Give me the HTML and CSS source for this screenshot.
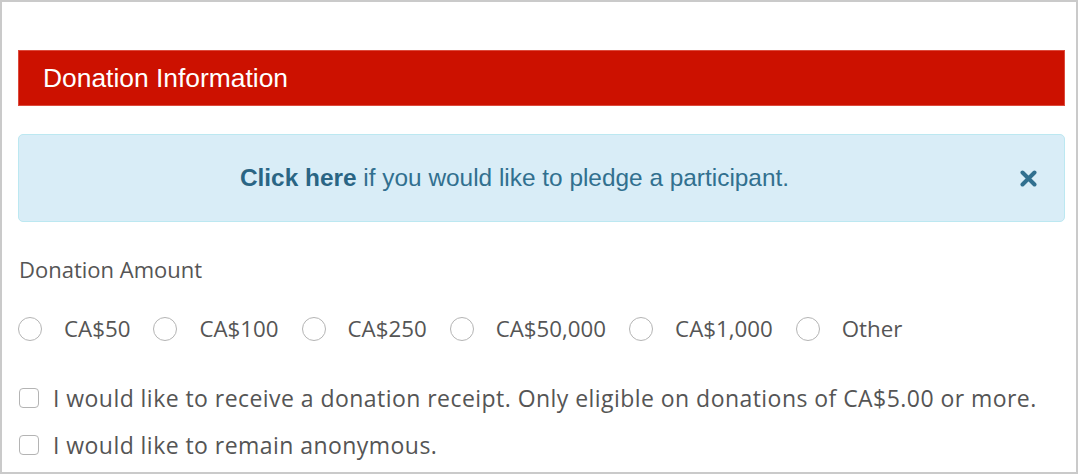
FILE: index.html
```html
<!DOCTYPE html>
<html>
<head>
    <title>Donation Information</title>
    <link rel="stylesheet" href="styles.css">
</head>
<body>
    <div class="frame">
        <div class="section-head">Donation Information</div>

        <div class="alert">
            <p class="alert-text"><a href="#" class="alert-link">Click here</a> if you would like to pledge a participant.</p>
            <button class="close" type="button" aria-label="Close">
                <svg width="17" height="17" viewBox="0 0 17 17"><path d="M2.5 2.5 L14.5 14.5 M14.5 2.5 L2.5 14.5" stroke="#31708f" stroke-width="4" stroke-linecap="round"/></svg>
            </button>
        </div>

        <div class="field-label">Donation Amount</div>
        <div class="amounts">
            <label class="amount"><input type="radio" name="amount"><span>CA$50</span></label>
            <label class="amount"><input type="radio" name="amount"><span>CA$100</span></label>
            <label class="amount"><input type="radio" name="amount"><span>CA$250</span></label>
            <label class="amount"><input type="radio" name="amount"><span>CA$50,000</span></label>
            <label class="amount"><input type="radio" name="amount"><span>CA$1,000</span></label>
            <label class="amount"><input type="radio" name="amount"><span>Other</span></label>
        </div>

        <label class="check"><input type="checkbox"><span>I would like to receive a donation receipt. Only eligible on donations of CA$5.00 or more.</span></label>
        <label class="check"><input type="checkbox"><span>I would like to remain anonymous.</span></label>
    </div>
</body>
</html>
```

FILE: styles.css
```css
html, body { margin: 0; padding: 0; background: #fff; }
.frame { box-sizing: border-box; width: 1078px; height: 474px; border: 2px solid #cacaca; padding: 48px 11px 0 16px; overflow: hidden; }

.section-head { height: 56px; box-sizing: border-box; border: 1px solid #dc4a3c; background: #cc1100; color: #fff; font-family: "Liberation Sans", Arial, sans-serif; font-size: 26.4px; line-height: 54px; padding-left: 24px; }

.alert { display: flex; align-items: center; margin-top: 28px; height: 88px; box-sizing: border-box; background: #d9edf7; border: 1px solid #bce8f1; border-radius: 5px; color: #31708f; font-family: "Liberation Sans", Arial, sans-serif; font-size: 24.4px; }
.alert-text { flex: 1; margin: 0; text-align: center; }
.alert-link { color: #2a6584; font-weight: bold; text-decoration: none; }
.close { border: 0; background: none; padding: 0; margin: 0 27px 0 10px; width: 17px; height: 17px; display: flex; }

.field-label { margin-top: 33px; font-family: "Open Sans", sans-serif; font-size: 22px; color: #555; line-height: 28px; padding-left: 1px; }

.amounts { display: flex; align-items: center; gap: 23px; margin-top: 30px; font-family: "Open Sans", sans-serif; font-size: 22.3px; color: #555; }
.amount { display: flex; align-items: center; gap: 22px; }
.amount input { appearance: none; -webkit-appearance: none; margin: 0; width: 24px; height: 24px; border: 1.5px solid #b4b4b4; border-radius: 50%; background: #fff; box-sizing: border-box; }

.check { display: flex; align-items: center; gap: 14px; height: 47px; font-family: "Open Sans", sans-serif; font-size: 23px; letter-spacing: 0.45px; color: #555; padding-left: 1px; }
.amounts + .check { margin-top: 30px; }
.check input { appearance: none; -webkit-appearance: none; margin: 0; width: 20px; height: 20px; border: 1.5px solid #b4b4b4; border-radius: 4px; background: #fff; box-sizing: border-box; }
```
